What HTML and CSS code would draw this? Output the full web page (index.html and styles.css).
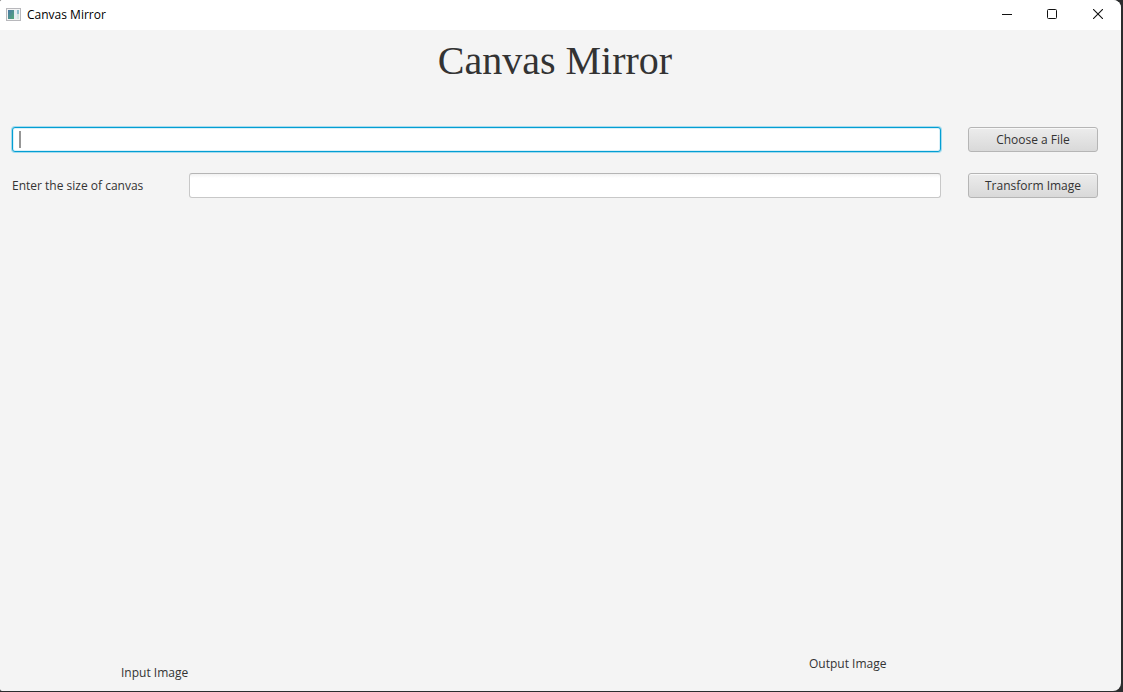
FILE: index.html
```html
<!DOCTYPE html>
<html lang="en">
<head>
<meta charset="utf-8">
<title>Canvas Mirror</title>
<link rel="stylesheet" href="styles.css">
</head>
<body>
<div class="window">
  <header class="titlebar">
    <svg class="app-icon" width="16" height="14" viewBox="0 0 16 14" aria-hidden="true">
      <defs>
        <linearGradient id="pane" x1="0" y1="0" x2="1" y2="1">
          <stop offset="0" stop-color="#4a78a8"/>
          <stop offset="1" stop-color="#52a878"/>
        </linearGradient>
      </defs>
      <rect x="0.5" y="0.5" width="14" height="12" fill="#f4f4f4" stroke="#b8b8bc"/>
      <rect x="2" y="2" width="6" height="9" fill="url(#pane)"/>
      <rect x="8" y="2" width="3" height="9" fill="#e4ecf2"/>
      <rect x="11" y="2" width="2" height="4" fill="#8cbccc"/>
      <rect x="11" y="6" width="2" height="5" fill="#d4e4e0"/>
    </svg>
    <span class="app-name">Canvas Mirror</span>
    <button class="caption" type="button" aria-label="Minimize">
      <svg width="12" height="10" viewBox="0 0 12 10"><path d="M2 5.5H12" stroke="#111"/></svg>
    </button>
    <button class="caption" type="button" aria-label="Maximize">
      <svg width="10" height="10" viewBox="0 0 10 10"><rect x="0.5" y="0.5" width="9" height="9" rx="1" fill="none" stroke="#111"/></svg>
    </button>
    <button class="caption" type="button" aria-label="Close">
      <svg width="10" height="10" viewBox="0 0 10 10"><path d="M0 0L10 10M10 0L0 10" stroke="#111" stroke-width="1.1"/></svg>
    </button>
  </header>
  <main class="content">
    <h1 class="heading">Canvas Mirror</h1>
    <form class="form">
      <div class="row">
        <input class="field field-active" type="text" aria-label="File path">
        <button class="button" type="button">Choose a File</button>
      </div>
      <div class="row">
        <div class="size">
          <label class="size-label" for="size">Enter the size of canvas</label>
          <input class="field" id="size" type="text">
        </div>
        <button class="button" type="button">Transform Image</button>
      </div>
    </form>
    <div class="images">
      <span class="input-caption">Input Image</span>
      <span class="output-caption">Output Image</span>
    </div>
  </main>
</div>
</body>
</html>
```
FILE: styles.css
```css
* {
  box-sizing: border-box;
}

body {
  margin: 0;
  padding: 0 2px 1px 0;
  background: #2b2d2e;
  color: #333;
  font: 12px/16px "Open Sans", "Noto Sans", sans-serif;
}

.window {
  display: flex;
  flex-direction: column;
  min-height: calc(100vh - 1px);
  overflow: hidden;
  border-radius: 2px 8px 8px 2px;
  background: #f4f4f4;
}

.titlebar {
  display: flex;
  align-items: center;
  height: 30px;
  padding-left: 6px;
  background: #fff;
  color: #000;
}

.app-icon {
  margin-right: 5px;
}

.app-name {
  flex: 1;
}

.caption {
  display: flex;
  align-items: center;
  justify-content: center;
  width: 46px;
  height: 30px;
  padding: 0 0 2px;
  border: 0;
  background: none;
}

.content {
  display: flex;
  flex: 1;
  flex-direction: column;
  padding: 8px 23px 10px 12px;
}

.heading {
  margin: 0;
  font: 40px/46px "Liberation Serif", serif;
  text-align: center;
}

.form {
  display: grid;
  gap: 21px;
  margin-top: 43px;
}

.row {
  display: grid;
  grid-template-columns: 1fr 130px;
  column-gap: 27px;
}

.size {
  display: flex;
  align-items: center;
}

.size-label {
  width: 177px;
}

.field {
  flex: 1;
  min-width: 0;
  height: 25px;
  padding: 0 7px;
  border: 1px solid #c8c8c8;
  border-top-color: #b5b5b5;
  border-radius: 3px;
  outline: 0;
  background: linear-gradient(#f2f2f2, #fff 4px);
  color: inherit;
  font: inherit;
}

.field-active {
  border-color: #039ed3;
  background: linear-gradient(#969696, #969696) 6px 3px / 2px 17px no-repeat, #fff;
  box-shadow: 0 0 0 1px #a5dbed, inset 0 0 0 1px #d9f0f8;
}

.button {
  height: 25px;
  padding: 0;
  border: 1px solid #b5b5b5;
  border-radius: 3px;
  background: linear-gradient(#ececec, #d9d9d9);
  box-shadow: inset 0 1px #f8f8f8;
  color: inherit;
  font: inherit;
}

.images {
  display: grid;
  flex: 1;
  grid-template-columns: 109px 1fr 289px;
  align-items: end;
}

.input-caption {
  grid-column: 2;
}

.output-caption {
  padding-bottom: 9px;
}
```
